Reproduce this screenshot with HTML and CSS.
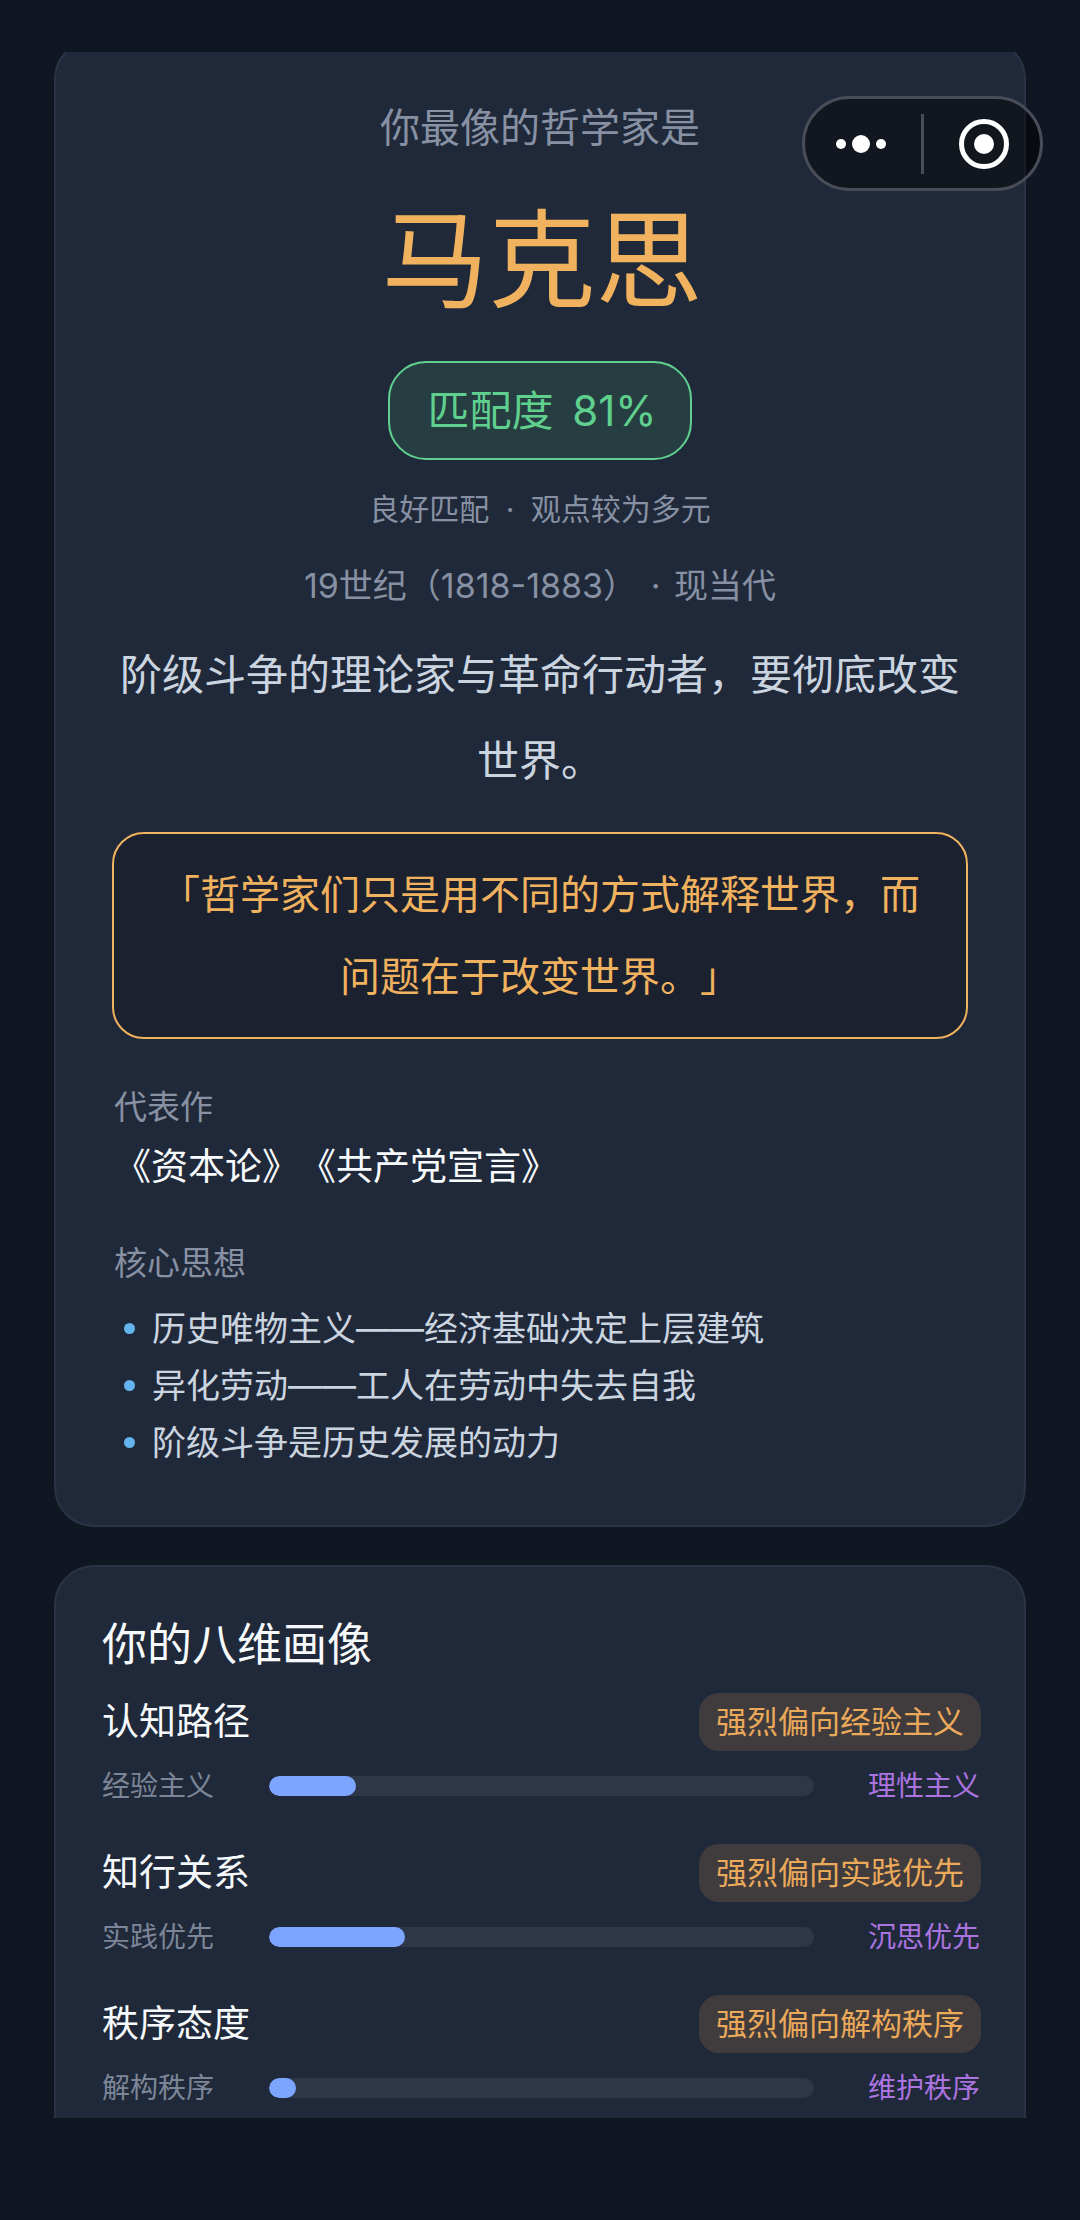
FILE: index.html
```html
<!DOCTYPE html>
<html lang="zh-CN">
<head>
    <meta charset="UTF-8">
    <meta name="viewport" content="width=device-width, initial-scale=1.0">
    <title>哲学家测试结果</title>
    <link rel="stylesheet" href="styles.css">
</head>
<body>
    <div class="capsule">
        <svg class="capsule-more" width="60" height="20" viewBox="0 0 60 20">
            <circle cx="9" cy="10" r="5" fill="#fff"/>
            <circle cx="29" cy="10" r="9" fill="#fff"/>
            <circle cx="49" cy="10" r="5" fill="#fff"/>
        </svg>
        <div class="capsule-line"></div>
        <svg class="capsule-close" width="50" height="50" viewBox="0 0 50 50">
            <circle cx="25" cy="25" r="22.5" fill="none" stroke="#fff" stroke-width="5"/>
            <circle cx="25" cy="25" r="10" fill="#fff"/>
        </svg>
    </div>

    <main class="scroll">
        <section class="card result">
            <p class="eyebrow">你最像的哲学家是</p>
            <h1 class="name">马克思</h1>
            <div class="match">匹配度 81%</div>
            <p class="match-note">良好匹配 · 观点较为多元</p>
            <p class="era">19世纪&#xFF08;1818-1883&#xFF09; · 现当代</p>
            <p class="desc">阶级斗争的理论家与革命行动者&#xFF0C;要彻底改变世界。</p>
            <blockquote class="quote">「哲学家们只是用不同的方式解释世界&#xFF0C;而问题在于改变世界。」</blockquote>
            <p class="label works-label">代表作</p>
            <p class="works">《资本论》《共产党宣言》</p>
            <p class="label ideas-label">核心思想</p>
            <ul class="ideas">
                <li>历史唯物主义——经济基础决定上层建筑</li>
                <li>异化劳动——工人在劳动中失去自我</li>
                <li>阶级斗争是历史发展的动力</li>
            </ul>
        </section>

        <section class="card profile">
            <h2 class="profile-title">你的八维画像</h2>

            <div class="dim">
                <div class="dim-head">
                    <span class="dim-name">认知路径</span>
                    <span class="dim-tag">强烈偏向经验主义</span>
                </div>
                <div class="dim-axis">
                    <span class="axis-left">经验主义</span>
                    <div class="track"><div class="fill" style="width: 16%"></div></div>
                    <span class="axis-right">理性主义</span>
                </div>
            </div>

            <div class="dim">
                <div class="dim-head">
                    <span class="dim-name">知行关系</span>
                    <span class="dim-tag">强烈偏向实践优先</span>
                </div>
                <div class="dim-axis">
                    <span class="axis-left">实践优先</span>
                    <div class="track"><div class="fill" style="width: 25%"></div></div>
                    <span class="axis-right">沉思优先</span>
                </div>
            </div>

            <div class="dim">
                <div class="dim-head">
                    <span class="dim-name">秩序态度</span>
                    <span class="dim-tag">强烈偏向解构秩序</span>
                </div>
                <div class="dim-axis">
                    <span class="axis-left">解构秩序</span>
                    <div class="track"><div class="fill" style="width: 5%"></div></div>
                    <span class="axis-right">维护秩序</span>
                </div>
            </div>
        </section>
    </main>
</body>
</html>
```

FILE: styles.css
```css
* {
    box-sizing: border-box;
}
body {
    margin: 0;
    height: 2220px;
    overflow: hidden;
    background-color: #101622;
    font-family: Inter, "Noto Sans CJK SC", sans-serif;
    color: #cbd5e0;
    text-spacing-trim: space-all;
}
p, h1, h2, ul, blockquote {
    margin: 0;
    padding: 0;
    font-weight: 400;
}

/* Capsule of the mini program, lies over the page */
.capsule {
    position: absolute;
    top: 96px;
    left: 802px;
    width: 241px;
    height: 95px;
    display: flex;
    align-items: center;
    border: 3px solid #484d57;
    border-radius: 48px;
    background-color: rgba(0, 0, 0, 0.45);
    z-index: 2;
}
.capsule-more {
    margin-left: 27px;
}
.capsule-line {
    width: 3px;
    height: 60px;
    margin-left: 29px;
    background-color: #484d57;
}
.capsule-close {
    margin-left: 35px;
}

/* Scroll area */
.scroll {
    height: 2066px;
    margin-top: 52px;
    overflow: hidden;
    position: relative;
}
.card {
    margin: 0 54px;
    background-color: #202939;
    border: 2px solid #2a3444;
    border-radius: 40px;
}

/* Result card */
.result {
    margin-top: -13px;
    margin-bottom: 38px;
    padding: 59px 56px 54px;
    text-align: center;
}
.eyebrow {
    font-size: 40px;
    line-height: 56px;
    color: #8791a3;
}
.name {
    padding-left: 4px;
    font-size: 107px;
    line-height: 144px;
    margin-top: 32px;
    color: #f0b25e;
}
.match {
    display: inline-block;
    margin-top: 29px;
    padding: 0 33px 0 37px;
    line-height: 95px;
    font-size: 42px;
    word-spacing: 7px;
    color: #5fd08e;
    background-color: rgba(72, 187, 120, 0.15);
    border: 2px solid #5fd08e;
    border-radius: 38px;
}
.match-note {
    margin-top: 27px;
    font-size: 30px;
    line-height: 44px;
    word-spacing: 8px;
    color: #8791a3;
}
.era {
    margin-top: 30px;
    font-size: 34px;
    line-height: 50px;
    word-spacing: 4px;
    color: #8791a3;
}
.desc {
    margin-top: 21px;
    font-size: 42px;
    line-height: 86px;
    color: #cbd5e0;
}
.quote {
    margin-top: 28px;
    padding: 20px 30px 19px;
    font-size: 40px;
    line-height: 82px;
    color: #f0b25e;
    background-color: #1b212e;
    border: 2px solid #f0b25e;
    border-radius: 32px;
}
.label {
    padding-left: 2px;
    font-size: 33px;
    line-height: 46px;
    color: #8791a3;
    text-align: left;
}
.works-label {
    margin-top: 45px;
}
.works {
    margin-top: 11px;
    padding-left: 2px;
    font-size: 37px;
    line-height: 52px;
    color: #f7fafc;
    text-align: left;
}
.ideas-label {
    margin-top: 47px;
}
.ideas {
    margin-top: 14px;
    list-style: none;
    text-align: left;
}
.ideas li {
    display: flex;
    align-items: center;
    gap: 17px;
    padding-left: 12px;
    font-size: 34px;
    line-height: 57px;
    color: #cbd5e0;
}
.ideas li::before {
    content: "";
    width: 11px;
    height: 11px;
    border-radius: 50%;
    background-color: #63b3ed;
}

/* Profile card */
.profile {
    padding: 48px 43px 60px 46px;
}
.profile-title {
    font-size: 45px;
    line-height: 60px;
    color: #f7fafc;
}
.dim {
    margin-top: 18px;
}
.dim + .dim {
    margin-top: 38px;
}
.dim-head {
    display: flex;
    align-items: center;
    justify-content: space-between;
}
.dim-name {
    font-size: 37px;
    line-height: 58px;
    color: #f7fafc;
}
.dim-tag {
    padding: 0 17px;
    font-size: 31px;
    line-height: 58px;
    color: #eba95a;
    background-color: rgba(246, 173, 85, 0.15);
    border-radius: 20px;
}
.dim-axis {
    display: flex;
    align-items: center;
    margin-top: 15px;
    font-size: 28px;
    line-height: 40px;
}
.axis-left {
    width: 167px;
    color: #7c8698;
}
.axis-right {
    margin-left: 54px;
    white-space: nowrap;
    color: #ab74e0;
}
.track {
    width: 545px;
    height: 20px;
    background-color: #2d3748;
    border-radius: 10px;
    overflow: hidden;
}
.fill {
    height: 100%;
    background-color: #7ba5ff;
    border-radius: 10px;
}
```
